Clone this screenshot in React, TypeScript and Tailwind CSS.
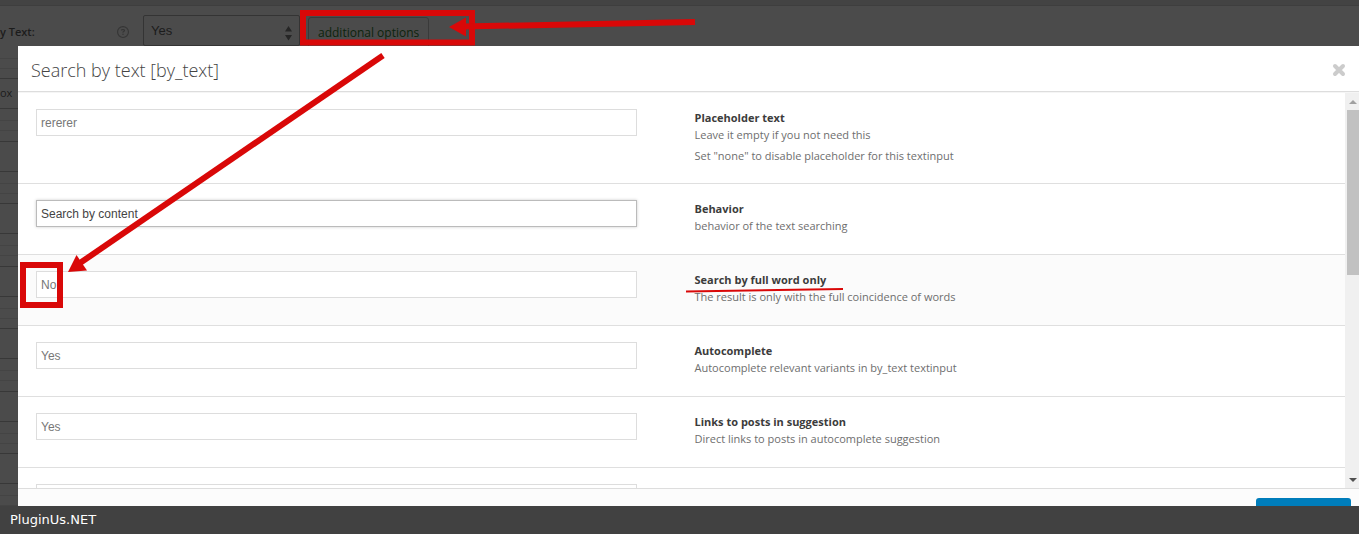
import clsx from 'clsx'
import { FaRegCircleQuestion } from 'react-icons/fa6'

type Option = {
  id: string
  title: string
  hints: string[]
  value: string
  kind: 'text' | 'select'
  focused?: boolean
  highlighted?: boolean
}

const options: Option[] = [
  {
    id: 'placeholder',
    title: 'Placeholder text',
    hints: [
      'Leave it empty if you not need this',
      'Set "none" to disable placeholder for this textinput',
    ],
    value: 'rererer',
    kind: 'text',
  },
  {
    id: 'behavior',
    title: 'Behavior',
    hints: ['behavior of the text searching'],
    value: 'Search by content',
    kind: 'select',
    focused: true,
  },
  {
    id: 'full-word',
    title: 'Search by full word only',
    hints: ['The result is only with the full coincidence of words'],
    value: 'No',
    kind: 'select',
    highlighted: true,
  },
  {
    id: 'autocomplete',
    title: 'Autocomplete',
    hints: ['Autocomplete relevant variants in by_text textinput'],
    value: 'Yes',
    kind: 'select',
  },
  {
    id: 'links',
    title: 'Links to posts in suggestion',
    hints: ['Direct links to posts in autocomplete suggestion'],
    value: 'Yes',
    kind: 'select',
  },
]

const fieldClass =
  "block h-[27px] w-full appearance-none border bg-white px-1 font-['Liberation_Sans',sans-serif] text-xs outline-none"

function OptionRow({ option }: { option: Option }) {
  const className = clsx(
    fieldClass,
    option.focused
      ? 'border-[#bbb] text-[#444] shadow-[0_0_3px_rgba(0,0,0,0.2)]'
      : 'border-[#ddd] text-[#777]'
  )

  return (
    <div
      className={clsx(
        'grid min-h-[71px] grid-cols-2 border-b border-[#dfdfdf] pt-4 pb-[19px]',
        option.highlighted && 'bg-[#fbfbfb]'
      )}
    >
      <div className="pr-[45px] pl-[18px]">
        {option.kind === 'text' ? (
          <input
            id={option.id}
            type="text"
            defaultValue={option.value}
            className={className}
          />
        ) : (
          <select
            id={option.id}
            defaultValue={option.value}
            className={className}
          >
            <option>{option.value}</option>
          </select>
        )}
      </div>
      <div className="pl-[13px] text-[11px] leading-[17px] text-[#6e6e6e]">
        <label htmlFor={option.id} className="block font-bold text-[#3c3c3c]">
          {option.title}
        </label>
        {option.hints.map((hint) => (
          <p key={hint} className="not-last:mb-1">
            {hint}
          </p>
        ))}
      </div>
    </div>
  )
}

function Scrollbar() {
  return (
    <div className="flex w-[14px] shrink-0 flex-col bg-[#f0f0f0] pl-[2px]">
      <button
        type="button"
        aria-label="Scroll up"
        className="flex h-[17px] items-center justify-center"
      >
        <svg width="8" height="4" viewBox="0 0 8 4" fill="#a0a0a0">
          <path d="M4 0 8 4H0z" />
        </svg>
      </button>
      <div className="h-[165px] bg-[#c1c1c1]" />
      <button
        type="button"
        aria-label="Scroll down"
        className="mt-auto flex h-[17px] items-center justify-center"
      >
        <svg width="8" height="4" viewBox="0 0 8 4" fill="#505050">
          <path d="M0 0H8L4 4z" />
        </svg>
      </button>
    </div>
  )
}

function Modal() {
  return (
    <div
      role="dialog"
      aria-labelledby="modal-title"
      className="absolute top-[46px] right-0 bottom-0 left-[18px] flex flex-col overflow-hidden bg-white"
    >
      <header className="flex h-[46px] shrink-0 items-center justify-between border-b border-[#ddd] px-[13px] pt-[2px]">
        <h1 id="modal-title" className="text-lg font-light text-[#444]">
          Search by text [by_text]
        </h1>
        <button type="button" aria-label="Close">
          <svg
            width="14"
            height="14"
            viewBox="0 0 14 14"
            stroke="#ccc"
            strokeWidth="4"
            strokeLinecap="round"
          >
            <path d="m3 3 8 8M11 3l-8 8" />
          </svg>
        </button>
      </header>

      <div className="flex min-h-0 flex-1 border-t border-[#f5f5f5]">
        <div className="min-w-0 flex-1 overflow-hidden">
          {options.map((option) => (
            <OptionRow key={option.id} option={option} />
          ))}
          <div className="grid grid-cols-2 pt-4">
            <div className="pr-[45px] pl-[18px]">
              <input
                type="text"
                aria-label="Next option"
                className={clsx(fieldClass, 'border-[#ddd]')}
              />
            </div>
          </div>
        </div>
        <Scrollbar />
      </div>

      <footer className="flex h-[18px] shrink-0 items-start justify-end border-t border-[#ddd] bg-[#fcfcfc] pt-[9px] pr-2">
        <button
          type="button"
          aria-label="Apply"
          className="h-8 w-[95px] shrink-0 rounded-[3px] bg-[#007dbb]"
        />
      </footer>
    </div>
  )
}

function SettingsPage() {
  return (
    <div className="text-[#1c1c1c]">
      <div className="h-[6px] border-b border-[#3e3e3e] bg-[#434343]" />
      <div className="flex h-[52px] items-start pt-[9px]">
        <label
          htmlFor="by-text"
          className="w-[117px] text-[11px] leading-[34px] font-semibold"
        >
          y Text:
        </label>
        <FaRegCircleQuestion className="mt-[11px] mr-[14px] size-3 text-[#353535]" />
        <div className="relative w-[157px]">
          <select
            id="by-text"
            defaultValue="Yes"
            className="h-[31px] w-full appearance-none rounded-[2px] border border-[#343434] px-[7px] font-['Liberation_Sans',sans-serif] text-[13px]"
          >
            <option>Yes</option>
          </select>
          <svg
            className="pointer-events-none absolute top-[11px] right-2"
            width="7"
            height="15"
            viewBox="0 0 7 15"
            fill="#262626"
          >
            <path d="M3.500 0 7 5.500H0zM0 9H7L3.500 14.500z" />
          </svg>
        </div>
        <button
          type="button"
          className="mt-[2px] ml-2 h-8 rounded-[3px] border border-[#3a3a3a] px-[9px] text-xs text-[#0d240d]"
        >
          additional options
        </button>
      </div>
      <div className="mb-[9px] h-[11px] border-y border-[#444]" />
      {[0, 1, 2, 3, 4, 5, 6].map((row) => (
        <div key={row} className="odd:pb-[9px] even:pb-[10px]">
          <div className="mb-[11px] h-[31px] border-y border-[#383838] text-[11px] leading-7">
            {row === 0 && 'ox'}
          </div>
          <div className="h-[11px] border-y border-[#444]" />
        </div>
      ))}
    </div>
  )
}

// Red arrows and frames drawn over the whole page
function Annotations() {
  return (
    <svg
      className="pointer-events-none absolute top-0 left-0"
      width="860"
      height="320"
      viewBox="0 0 860 320"
      fill="none"
      stroke="#d90808"
      strokeWidth="6"
    >
      <rect x="303" y="13" width="169" height="29.500" />
      <path d="M695 22 463 26.500" />
      <path d="m449 27 17-9.500V36.500z" fill="#d90808" stroke="none" />
      <path d="M383 55.500 80 263" />
      <path d="m68 272 8.500-17 10.500 15.500z" fill="#d90808" stroke="none" />
      <rect x="23" y="265" width="37" height="40" />
      <path d="M686 291.500 843 289" strokeWidth="2" />
    </svg>
  )
}

export default function App() {
  return (
    <div className="relative flex h-screen flex-col overflow-hidden bg-[#4b4b4b] font-['Open_Sans',sans-serif]">
      <main className="relative min-h-0 flex-1 overflow-hidden">
        <SettingsPage />
        <Modal />
      </main>
      <div className="flex h-7 shrink-0 items-center bg-[#414141] px-[10px] font-['DejaVu_Sans',sans-serif] text-[13px] text-white">
        PluginUs.NET
      </div>
      <Annotations />
    </div>
  )
}
